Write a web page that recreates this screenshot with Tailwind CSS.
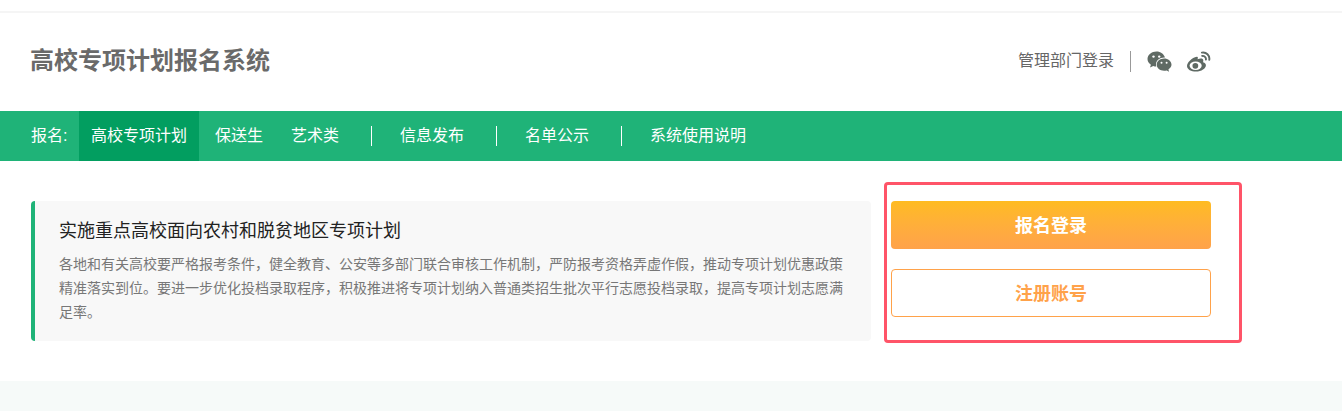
<!DOCTYPE html>
<html lang="zh">
<head>
<meta charset="utf-8">
<script src="https://cdn.jsdelivr.net/npm/@tailwindcss/browser@4"></script>
<title>高校专项计划报名系统</title>
</head>
<body class="bg-white overflow-hidden font-['Liberation_Sans','Noto_Sans_CJK_SC',sans-serif]">
<div class="relative h-[411px] w-[1342px]">
  <div class="h-[11px] bg-white"></div>
  <div class="h-[2px] bg-[#f5f5f5]"></div>
  <header class="h-[98px] pl-[30px] w-[1211px] flex items-center justify-between">
    <h1 class="text-[24px] font-bold text-[#6a6a6a] leading-none -mt-[2px]">高校专项计划报名系统</h1>
    <div class="flex items-center -mt-[2px]">
      <a class="text-[16px] text-[#666666] leading-none">管理部门登录</a>
      <span class="w-px h-[21px] bg-[#999999] ml-4 mr-4"></span>
      <svg class="w-[25px] h-[21px]" viewBox="0 0 25 21" fill="#5f6a64">
        <path d="M9.5 0.5C4.6 0.5 0.5 3.8 0.5 8c0 2.4 1.3 4.3 3.4 5.8L3 16.5l3.2-1.6c1.1.3 2 .5 3.1.6-.2-.6-.3-1.2-.3-1.9 0-3.900 3.600-7 8.200-7h.8C17 3 13.600.5 9.500.5z"/>
        <path d="M24.500 13.600c0-3.500-3.500-6.200-7.400-6.200-4.200 0-7.400 2.800-7.400 6.200s3.200 6.200 7.400 6.200c.9 0 1.700-.2 2.600-.4l2.400 1.300-.7-2.200c1.900-1.300 3.100-3 3.100-4.900z"/>
        <circle cx="6.500" cy="5.600" r="1.200" fill="#fff"/><circle cx="12.200" cy="5.600" r="1.200" fill="#fff"/>
        <circle cx="14.500" cy="11.800" r="1" fill="#fff"/><circle cx="19.600" cy="11.800" r="1" fill="#fff"/>
      </svg>
      <svg class="w-[24px] h-[21px] ml-[15px]" viewBox="0 0 25 21" fill="#5f6a64">
        <path d="M10.200 5.600c-2.400.3-5.200 1.900-7.300 4C1 11.500 0 13.400 0 15.100 0 18.700 4.500 21 9.300 21c5.800 0 10.400-3.300 10.400-6.600 0-1.900-1.700-2.700-3.100-3.100.5-1.300.7-2.800-.3-3.500-1.200-.9-3.500-.5-5.300.3.600-1.400.5-2.700-.8-2.500z"/>
        <ellipse cx="9" cy="15" rx="6.300" ry="4.400" fill="#fff"/>
        <circle cx="8.700" cy="15" r="3" fill="#5f6a64"/>
        <path d="M15.500 1.200c4.500-.9 8.500 3 7.700 7.600M15.800 4.700c2.200-.4 4.300 1.600 3.900 3.800" fill="none" stroke="#5f6a64" stroke-width="2" stroke-linecap="round"/>
      </svg>
    </div>
  </header>
  <nav class="h-[50px] bg-[#1fb378] flex items-center pl-[31px] text-white text-[16px] leading-none">
    <span class="w-[48px]">报名:</span>
    <a class="h-full w-[120px] bg-[#029e60] flex items-center justify-center">高校专项计划</a>
    <a class="ml-[16px]">保送生</a>
    <a class="ml-[28px]">艺术类</a>
    <span class="w-px h-[20px] bg-white ml-[32px]"></span>
    <a class="ml-[28px]">信息发布</a>
    <span class="w-px h-[20px] bg-white ml-[32px]"></span>
    <a class="ml-[28px]">名单公示</a>
    <span class="w-px h-[20px] bg-white ml-[32px]"></span>
    <a class="ml-[28px]">系统使用说明</a>
  </nav>
  <main class="h-[220px] pl-[31px] pt-10 flex items-start">
    <section class="w-[840px] h-[140px] bg-[#f8f8f8] rounded-[4px] border-l-4 border-[#1fb378] pl-[24px] pr-[24px] pt-[18px]">
      <h2 class="text-[18px] leading-[24px] text-[#222222]">实施重点高校面向农村和脱贫地区专项计划</h2>
      <p class="mt-[9px] text-[14px] leading-[24px] text-[#777777]">各地和有关高校要严格报考条件，健全教育、公安等多部门联合审核工作机制，严防报考资格弄虚作假，推动专项计划优惠政策精准落实到位。要进一步优化投档录取程序，积极推进将专项计划纳入普通类招生批次平行志愿投档录取，提高专项计划志愿满足率。</p>
    </section>
    <div class="ml-5 w-[320px] flex flex-col gap-5">
      <a class="h-12 pt-[2px] rounded-[4px] bg-gradient-to-b from-[#ffbb20] to-[#ffa24a] text-white font-bold text-[18px] flex items-center justify-center">报名登录</a>
      <a class="h-12 pt-[2px] rounded-[4px] border border-[#ffa24a] text-[#ffa24a] font-bold text-[18px] flex items-center justify-center">注册账号</a>
    </div>
  </main>
  <div class="h-[30px] bg-[#f6faf9]"></div>
  <div class="absolute left-[884px] top-[182px] w-[358px] h-[161px] border-[3px] border-[#ff5468] rounded-[4px]"></div>
</div>
</body>
</html>
